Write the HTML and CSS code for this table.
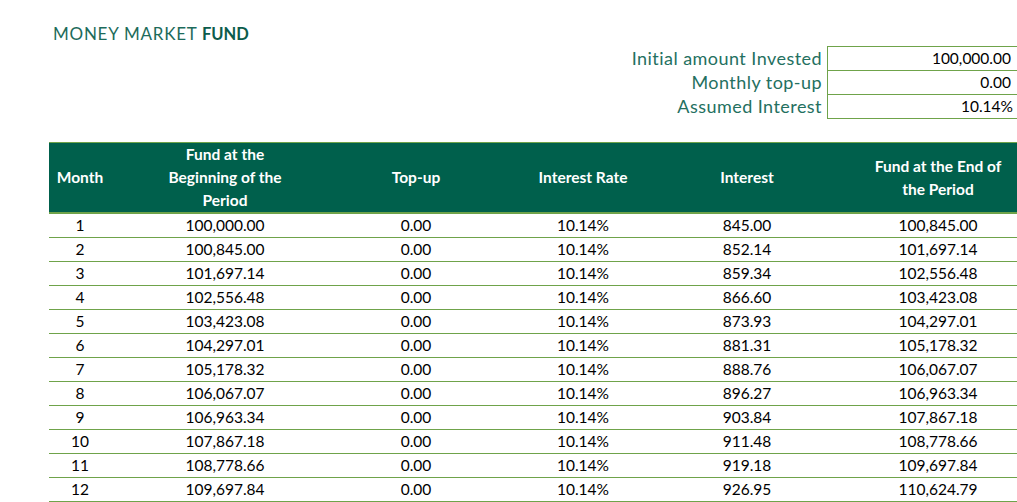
FILE: index.html
```html
<!DOCTYPE html>
<html lang="en">
<head>
<meta charset="utf-8">
<title>Money Market Fund</title>
<link rel="stylesheet" href="styles.css">
</head>
<body>
<div class="page">
  <h1 class="title"><span class="light">MONEY MARKET</span> <b>FUND</b></h1>

  <div class="inputs">
    <div class="labels">
      <div class="label">Initial amount Invested</div>
      <div class="label">Monthly top-up</div>
      <div class="label">Assumed Interest</div>
    </div>
    <div class="box">
      <div class="val">100,000.00</div>
      <div class="val">0.00</div>
      <div class="val pct">10.14%</div>
    </div>
  </div>

  <table class="grid">
    <colgroup>
      <col class="c1"><col class="c2"><col class="c3"><col class="c4"><col class="c5"><col class="c6">
    </colgroup>
    <thead>
      <tr>
        <th>Month</th>
        <th>Fund at the<br>Beginning of the<br>Period</th>
        <th>Top-up</th>
        <th>Interest Rate</th>
        <th>Interest</th>
        <th>Fund at the End of<br>the Period</th>
      </tr>
    </thead>
    <tbody>
      <tr><td>1</td><td>100,000.00</td><td>0.00</td><td>10.14%</td><td>845.00</td><td>100,845.00</td></tr>
      <tr><td>2</td><td>100,845.00</td><td>0.00</td><td>10.14%</td><td>852.14</td><td>101,697.14</td></tr>
      <tr><td>3</td><td>101,697.14</td><td>0.00</td><td>10.14%</td><td>859.34</td><td>102,556.48</td></tr>
      <tr><td>4</td><td>102,556.48</td><td>0.00</td><td>10.14%</td><td>866.60</td><td>103,423.08</td></tr>
      <tr><td>5</td><td>103,423.08</td><td>0.00</td><td>10.14%</td><td>873.93</td><td>104,297.01</td></tr>
      <tr><td>6</td><td>104,297.01</td><td>0.00</td><td>10.14%</td><td>881.31</td><td>105,178.32</td></tr>
      <tr><td>7</td><td>105,178.32</td><td>0.00</td><td>10.14%</td><td>888.76</td><td>106,067.07</td></tr>
      <tr><td>8</td><td>106,067.07</td><td>0.00</td><td>10.14%</td><td>896.27</td><td>106,963.34</td></tr>
      <tr><td>9</td><td>106,963.34</td><td>0.00</td><td>10.14%</td><td>903.84</td><td>107,867.18</td></tr>
      <tr><td>10</td><td>107,867.18</td><td>0.00</td><td>10.14%</td><td>911.48</td><td>108,778.66</td></tr>
      <tr><td>11</td><td>108,778.66</td><td>0.00</td><td>10.14%</td><td>919.18</td><td>109,697.84</td></tr>
      <tr><td>12</td><td>109,697.84</td><td>0.00</td><td>10.14%</td><td>926.95</td><td>110,624.79</td></tr>
    </tbody>
  </table>
</div>
</body>
</html>
```
FILE: styles.css
```css
html, body {
  margin: 0;
  padding: 0;
  background: #ffffff;
  overflow: hidden;
}

.page {
  width: 1055px;
  height: 502px;
  font-family: Lato, "Liberation Sans", sans-serif;
  color: #000;
}

.title {
  margin: 0;
  padding: 24px 0 0 53px;
  height: 22px;
  line-height: 20px;
  font-size: 17px;
  font-weight: 400;
  color: #1d6b5b;
}

.title .light {
  letter-spacing: 0.75px;
}

.title b {
  font-weight: 700;
  color: #0b5c4b;
  font-size: 16.5px;
}

.inputs {
  display: flex;
  justify-content: flex-end;
}

.labels {
  display: flex;
  flex-direction: column;
  padding-right: 5px;
}

.label {
  height: 24px;
  line-height: 24px;
  text-align: right;
  font-size: 18px;
  letter-spacing: 0.45px;
  color: #24705f;
}

.box {
  width: 227px;
  border: 1px solid #6fa34a;
  border-right: 0;
}

.val {
  height: 23px;
  line-height: 23px;
  font-size: 15.5px;
  text-align: right;
  padding-right: 44px;
  border-bottom: 1px solid #6fa34a;
}

.val:last-child {
  border-bottom: 0;
}

.val.pct {
  padding-right: 42px;
}

.grid {
  margin: 23px 0 0 49px;
  border-collapse: collapse;
  table-layout: fixed;
  width: 1006px;
  font-size: 15.5px;
}

.c1 { width: 62px; }
.c2 { width: 228px; }
.c3 { width: 154px; }
.c4 { width: 180px; }
.c5 { width: 148px; }
.c6 { width: 234px; }

.grid th {
  background: #00604c;
  color: #ffffff;
  font-weight: 700;
  line-height: 23px;
  height: 69px;
  padding: 0;
  text-align: center;
  vertical-align: middle;
  border-top: 1px solid #6fa34a;
  border-bottom: 2px solid #6fa34a;
}

.grid td {
  height: 23px;
  line-height: 23px;
  padding: 0;
  text-align: center;
  border-bottom: 1px solid #6fa34a;
}
```
